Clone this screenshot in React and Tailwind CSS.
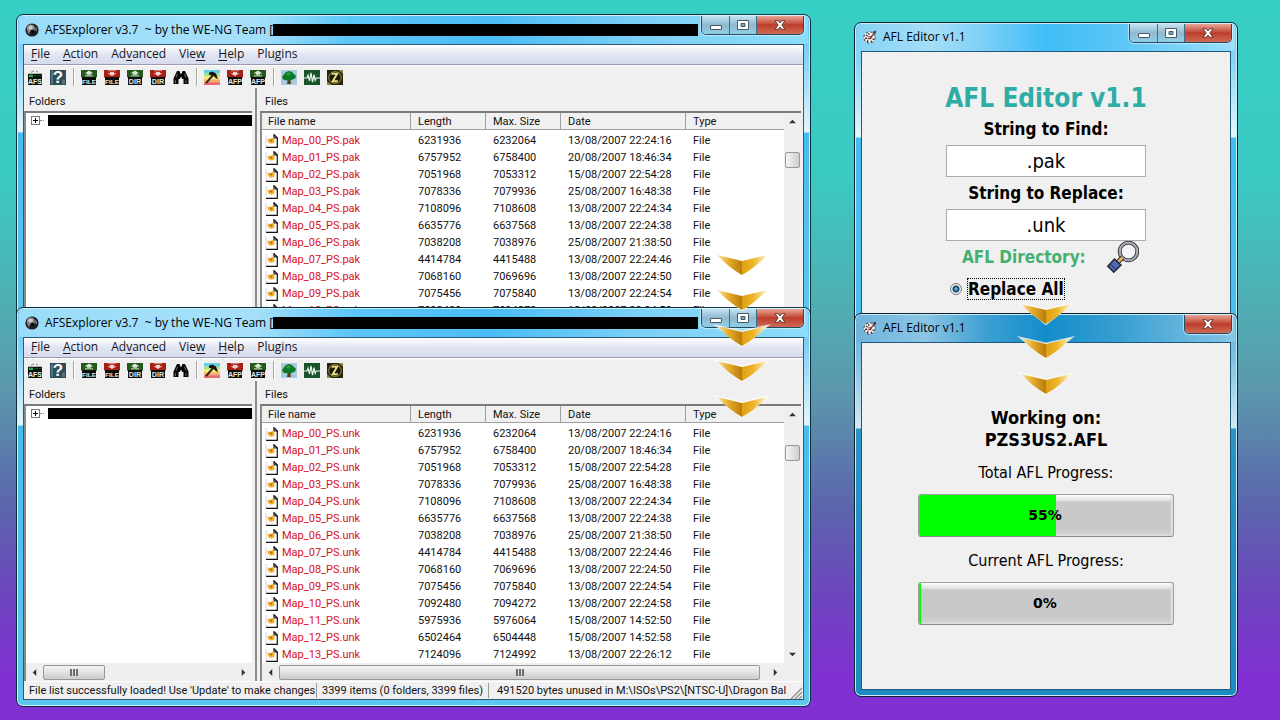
import React from "react";

const files = [
  ["6231936", "6232064", "13/08/2007 22:24:16"],
  ["6757952", "6758400", "20/08/2007 18:46:34"],
  ["7051968", "7053312", "15/08/2007 22:54:28"],
  ["7078336", "7079936", "25/08/2007 16:48:38"],
  ["7108096", "7108608", "13/08/2007 22:24:34"],
  ["6635776", "6637568", "13/08/2007 22:24:38"],
  ["7038208", "7038976", "25/08/2007 21:38:50"],
  ["4414784", "4415488", "13/08/2007 22:24:46"],
  ["7068160", "7069696", "13/08/2007 22:24:50"],
  ["7075456", "7075840", "13/08/2007 22:24:54"],
  ["7092480", "7094272", "13/08/2007 22:24:58"],
  ["5975936", "5976064", "15/08/2007 14:52:50"],
  ["6502464", "6504448", "15/08/2007 14:52:58"],
  ["7124096", "7124992", "13/08/2007 22:26:12"],
];

function SoccerIcon() {
  return (
    <svg viewBox="0 0 14 14" className="size-[14px] shrink-0" aria-hidden="true">
      <circle cx="7" cy="7" r="6.6" fill="#1f1f22" />
      <circle cx="5.8" cy="5.4" r="4" fill="#8a8a90" />
      <path d="M3 4.500l2.500-2 2.500 1-.8 2.500-2.800.5z" fill="#c9c9ce" />
      <path d="M5.500 7.500l2.600-1 1.700 2-1.600 2.200L5.500 10z" fill="#060607" />
      <path d="M10 3.800l2 1.800v2.600l-1.800-.8z" fill="#6f6f75" />
      <path d="M2 8.400l2 .8.8 2-1.600-.6z" fill="#7f7f85" />
    </svg>
  );
}

function EditorIcon() {
  return (
    <svg viewBox="0 0 14 14" className="size-[14px] shrink-0" aria-hidden="true">
      <circle cx="6.500" cy="7.500" r="5.600" fill="#f7f3f3" stroke="#3f393a" strokeWidth="1" strokeDasharray="2.400 2" />
      <path d="M3 5l1.500 1M2 8.500l2-.3M4 12l1.200-1.600M8.500 12.300L8 10.800M11.300 9.500l-1.800-.6M5.500 3.200l.6 1.600" stroke="#2c2526" strokeWidth="1.300" />
      <path d="M4.500 6.700h4M4.500 8.900l4-.8" stroke="#a84d53" strokeWidth="1.100" />
      <path d="M6.500 9L11.500 2.800" stroke="#6a3036" strokeWidth="1.300" />
      <path d="M9.500 2l3.400-1.500-.2 3.400z" fill="#741d27" />
    </svg>
  );
}

function Tag({ label, size = 7.2 }) {
  return (
    <>
      <path d="M1 7.500h14V16H1z" fill="#0b0d0b" />
      <text x="8" y="14.600" textAnchor="middle" fontSize={size} fontWeight="bold" fill="#e3e8e3" fontFamily="Liberation Sans, sans-serif">
        {label}
      </text>
    </>
  );
}

function Up({ label, size }) {
  return (
    <>
      <path d="M0 0h16v8H0z" fill="#24591c" />
      <path d="M8 .6l4.500 3H10V5H6V3.600H3.500z" fill="#d7ead2" />
      <path d="M4 6.200h8" stroke="#b9d1b4" strokeWidth="1.200" />
      <Tag label={label} size={size} />
    </>
  );
}

function Down({ label, size }) {
  return (
    <>
      <path d="M0 0h16v8H0z" fill="#a81f14" />
      <path d="M8 6.400l4.500-3H10V2H6v1.400H3.500z" fill="#f3d0cb" />
      <path d="M4 .8h8" stroke="#d69a93" strokeWidth="1" />
      <Tag label={label} size={size} />
    </>
  );
}

const art = {
  afs: (
    <>
      <path d="M4 2.500L7 .8M9 .8l2 1.500" stroke="#5b6b5b" strokeWidth=".8" />
      <path d="M1 4h14v12H1z" fill="#0a120b" />
      <path d="M2 5h4v2.500H2z" fill="#22b04a" />
      <path d="M7 6h8" stroke="#1d4727" />
      <text x="8" y="14.600" textAnchor="middle" fontSize="7" fontWeight="bold" fill="#e4f2e4" fontFamily="Liberation Sans, sans-serif">AFS</text>
    </>
  ),
  help: (
    <>
      <path d="M0 0h16v16H0z" fill="#2f4c57" />
      <path d="M1 1h2v14H1zM12 10h3v5h-3z" fill="#527583" />
      <text x="8" y="14" textAnchor="middle" fontSize="17" fontWeight="bold" fill="#f6fafb" fontFamily="Liberation Sans, sans-serif">?</text>
    </>
  ),
  upFile: <Up label="FILE" size={6.4} />,
  downFile: <Down label="FILE" size={6.4} />,
  upDir: <Up label="DIR" />,
  downDir: <Down label="DIR" />,
  find: (
    <>
      <path d="M4 1h2.500l1 3h1l1-3H12l3.500 8v6h-5v-5.500H9V8H7v1.500H5.500V15h-5V9z" fill="#080808" />
      <path d="M4.500 4L3 8M11.500 4L13 8M2.500 11v3M13 11v3" stroke="#8c8c8c" strokeWidth=".8" />
    </>
  ),
  tool: (
    <>
      <path d="M0 0h16v4H0z" fill="#65cfe3" />
      <path d="M0 4h16v3H0z" fill="#b5e07a" />
      <path d="M0 7h16v3H0z" fill="#f6ed79" />
      <path d="M0 10h16v3H0z" fill="#f5ae68" />
      <path d="M0 13h16v3H0z" fill="#ec6a72" />
      <path d="M2 14l7.500-9" stroke="#33240c" strokeWidth="2" />
      <path d="M5 3l3-1.500 4 2.200L14 9.500l-2-.8L9.500 6 5 5z" fill="#17140c" />
    </>
  ),
  downAfp: <Down label="AFP" size={7} />,
  upAfp: <Up label="AFP" size={7} />,
  tree: (
    <>
      <path d="M0 0h16v16H0z" fill="#a9cbe2" />
      <path d="M7 9h2.200l.8 6H6z" fill="#5a3d1e" />
      <path d="M8 1l3 1 1.500 2 2.500 2-.8 3-3.200 1.500-2 1-3-.4L2 10 1 7.500 3 4.500 5 2z" fill="#0f7a26" />
      <path d="M5 4l3-1.500 2 2-3 2z" fill="#27a340" />
    </>
  ),
  wave: (
    <>
      <path d="M0 0h16v16H0z" fill="#18532b" />
      <path d="M0 8.500h3l1-3 1.500 6L7 3l1.500 10L10 5l1.200 6 1-2.500H16" fill="none" stroke="#e9f4ea" strokeWidth="1.200" />
    </>
  ),
  zed: (
    <>
      <path d="M0 0h16v16H0z" fill="#24230b" />
      <path d="M11 0h5v4M0 12v4h5" fill="#8f8740" />
      <circle cx="8" cy="8" r="6.300" fill="#1b1a08" stroke="#8a8130" strokeWidth="1.200" />
      <path d="M4.800 3h7L7.500 10.800l2.500.2 1-1-.6 3H4L8.400 5l-2.400-.2-1.400 1z" fill="#e6dc8a" />
    </>
  ),
};

const tools = [
  ["afs", "Open AFS"], ["help", "About"], null,
  ["upFile", "Export file"], ["downFile", "Import file"], ["upDir", "Export folder"], ["downDir", "Import folder"], ["find", "Find"], null,
  ["tool", "Rebuild"], ["downAfp", "Import AFP"], ["upAfp", "Export AFP"], null,
  ["tree", "Tree plugin"], ["wave", "Audio plugin"], ["zed", "Z plugin"],
];

const menus = [
  ["", "F", "ile"], ["", "A", "ction"], ["Ad", "v", "anced"], ["Vie", "w", ""], ["", "H", "elp"], ["Plugins", "", ""],
];

function WindowButtons({ full }) {
  const glass = "bg-linear-to-b from-[#c5e3f2] via-[#8fb9cf] via-50% to-[#90cfe8]";
  return (
    <div className="flex h-[19px] shrink-0 overflow-hidden rounded-b-[5px] border border-t-0 border-[#234b63] shadow-[0_0_1px_1px_rgba(220,245,255,0.7)]">
      {full && (
        <>
          <button type="button" aria-label="Minimize" className={`flex w-7 items-center justify-center border-r border-[#3d6d87] ${glass}`}>
            <span className="mt-1 h-[5px] w-3 rounded-[1px] border border-[#4b5966] bg-white" />
          </button>
          <button type="button" aria-label="Maximize" className={`flex w-[27px] items-center justify-center border-r border-[#3d6d87] ${glass}`}>
            <svg viewBox="0 0 12 10" className="h-[10px] w-3" aria-hidden="true">
              <path d="M.5.5h11v9H.5z" fill="#fff" stroke="#4b5966" />
              <path d="M4 3.500h4v3H4z" fill="#7ba6bf" stroke="#4b5966" />
            </svg>
          </button>
        </>
      )}
      <button type="button" aria-label="Close" className="flex w-[46px] items-center justify-center bg-linear-to-b from-[#e5a597] via-[#bd3c2b] via-50% to-[#cf6a55]">
        <svg viewBox="0 0 12 10" className="h-[10px] w-3" aria-hidden="true">
          <path d="M1 .7h3.100L6 2.900 7.900.7H11L7.800 5 11 9.300H7.900L6 7.100 4.100 9.300H1L4.200 5z" fill="#fff" stroke="#573331" strokeWidth=".9" />
        </svg>
      </button>
    </div>
  );
}

function ScrollArrow({ label, d }) {
  return (
    <button type="button" aria-label={label} className="flex size-[17px] shrink-0 items-center justify-center">
      <svg viewBox="0 0 8 8" className="size-[7px]" aria-hidden="true">
        <path d={d} fill="#333" />
      </svg>
    </button>
  );
}

const LEFT = "M6 0v8L2 4z";
const RIGHT = "M2 0v8l4-4z";
const UP = "M0 6h8L4 2z";
const DOWN = "M0 2h8L4 6z";

function HScroll({ thumb }) {
  return (
    <div className="flex h-[18px] items-center bg-[#efefef]">
      <ScrollArrow label="Scroll left" d={LEFT} />
      <div className="flex flex-1">
        <div className={`flex h-[15px] items-center justify-center gap-px rounded-[2px] border border-[#979797] bg-linear-to-b from-[#f4f4f4] via-[#e2e2e2] via-50% to-[#cbcbcb] ${thumb}`}>
          <span className="h-[7px] w-[2px] bg-[#6d6d6d]" />
          <span className="h-[7px] w-[2px] bg-[#6d6d6d]" />
          <span className="h-[7px] w-[2px] bg-[#6d6d6d]" />
        </div>
      </div>
      <ScrollArrow label="Scroll right" d={RIGHT} />
    </div>
  );
}

function FileIcon() {
  return (
    <svg viewBox="0 0 13 14" className="h-[14px] w-[13px] shrink-0" aria-hidden="true">
      <path d="M1 1h8l3 3v9H1z" fill="#fdfdfd" />
      <path d="M1 13.300h11.300V4M9 .7l3.300 3.300H9z" fill="none" stroke="#111" strokeWidth="1.200" />
      <path d="M1 1v12" stroke="#c5c5c5" strokeWidth=".7" />
      <path d="M2.500 4.500l2.500.5L9 3.500l.6 5L7 9.500H4.800L2.800 7.500z" fill="#f1b129" />
      <path d="M5 5.500l2.500.3-.5 2-2-.7z" fill="#b8661c" />
    </svg>
  );
}

function Explorer({ extension, rows, complete, className }) {
  const head = "border-r border-b border-[#9f9f9f] bg-[#f0f0f0] pl-[7px] text-left font-normal";
  return (
    <section
      aria-label="AFSExplorer"
      className={`w-[795px] rounded-[7px] border border-[#0d2c38] bg-[linear-gradient(180deg,#5fc6f7_0px,#7fd2f8_40px,#e4f6fe_117px,#45bcf1_118px,#5cc8ef_100%)] p-px pb-[6px] shadow-[inset_0_0_0_1px_#c9f2ff] ${className}`}
    >
      <header className="mx-px flex h-7 items-start rounded-t-[5px] bg-[linear-gradient(90deg,#9adcf9_0%,#a5e0fa_30%,#5cc6f8_42%,#4bbdf6_60%,#7ed1f6_80%,#8cdcfb_100%)] pr-[4px] pl-[6px]">
        <div className="flex min-w-0 flex-1 items-center pt-[5px]">
          <SoccerIcon />
          <h2 className="ml-[6px] font-['Open_Sans','Noto_Sans',sans-serif] text-xs leading-[18px] whitespace-pre text-black">
            {"AFSExplorer v3.7  ~ by the WE-NG Team ["}
          </h2>
          <span className="mr-[3px] h-3 flex-1 bg-black" />
        </div>
        <WindowButtons full />
      </header>

      <div className="mx-[5px] border border-[#2b5b78] bg-[#f0f0f0] font-['Roboto','Liberation_Sans',sans-serif] text-[11px] leading-[15px] text-[#111]">
        <nav aria-label="Menu" className="flex h-5 items-center gap-[13px] border-b border-[#9a9ab0] bg-linear-to-b from-white via-[#e2e6f3] to-[#d6dbed] pb-[2px] pl-[7px] font-['Open_Sans','Noto_Sans',sans-serif] text-xs text-[#16161c]">
          {menus.map(([before, key, after]) => (
            <button key={before + key} type="button" className="leading-[18px]">
              {before}
              <span className="underline underline-offset-2">{key}</span>
              {after}
            </button>
          ))}
        </nav>

        <div role="toolbar" className="flex h-[23px] items-center border-t border-white pl-[3px]">
          {tools.map((tool, i) =>
            tool ? (
              <button key={tool[0]} type="button" aria-label={tool[1]} className="w-[23px]">
                <svg viewBox="0 0 16 16" preserveAspectRatio="none" className="h-[15px] w-4">{art[tool[0]]}</svg>
              </button>
            ) : (
              <span key={i} className="mr-[6px] h-[18px] w-[2px] border-r border-white bg-[#a5a5a5]" />
            )
          )}
        </div>

        <div className="flex gap-[3px] pr-[2px]">
          <section className="flex w-[228px] flex-col">
            <h3 className="h-[23px] pt-[6px] pl-[5px]">Folders</h3>
            <div className="flex flex-1 flex-col border-t-2 border-l-2 border-t-[#7a7a7a] border-l-[#8a8a8a] bg-white">
              <div className="flex flex-1 items-start pt-px pl-[5px]">
                <button type="button" aria-label="Expand folder" className="mt-[2px] flex size-[9px] items-center justify-center border border-[#777] bg-white">
                  <svg viewBox="0 0 5 5" className="size-[5px]"><path d="M2 0h1v2h2v1H3v2H2V3H0V2h2z" fill="#000" /></svg>
                </button>
                <span className="mt-[6px] mr-[4px] w-[4px] border-t border-dotted border-[#888]" />
                <span className="mt-px h-[11px] flex-1 bg-black" />
              </div>
              {complete && <HScroll thumb="w-[62px]" />}
            </div>
          </section>

          <span className="w-[2px] bg-[#8d8d8d]" />

          <section className="flex min-w-0 flex-1 flex-col">
            <h3 className="h-[23px] pt-[6px] pl-[5px]">Files</h3>
            <div className="border-t-2 border-l-2 border-t-[#7a7a7a] border-l-[#8a8a8a] bg-white">
              <div className="flex">
                <div className="flex-1">
                  <table className="w-full table-fixed border-separate border-spacing-0">
                    <thead>
                      <tr className="h-[17px]">
                        <th className="w-[149px] border-r border-b border-[#9f9f9f] bg-[#f0f0f0] pl-[6px] text-left font-normal">File name</th>
                        <th className={`w-[75px] ${head}`}>Length</th>
                        <th className={`w-[75px] ${head}`}>Max. Size</th>
                        <th className={`w-[125px] ${head}`}>Date</th>
                        <th className="border-b border-[#9f9f9f] bg-[#f0f0f0] pl-[7px] text-left font-normal">Type</th>
                      </tr>
                    </thead>
                    <tbody className="before:block before:h-[2px] before:content-['']">
                      {files.slice(0, rows).map(([length, max, date], i) => (
                        <tr key={i} className="h-[17px]">
                          <td className="p-0 pl-[3px] text-[#d9101a]">
                            <span className="flex h-[17px] items-center gap-[4px]">
                              <FileIcon />
                              {`Map_${String(i).padStart(2, "0")}_PS.${extension}`}
                            </span>
                          </td>
                          <td className="p-0 pl-[7px]">{length}</td>
                          <td className="p-0 pl-[7px]">{max}</td>
                          <td className="p-0 pl-[7px]">{date}</td>
                          <td className="p-0 pl-[7px]">File</td>
                        </tr>
                      ))}
                    </tbody>
                  </table>
                </div>
                <div className="flex w-[17px] flex-col items-center bg-[#efefef]">
                  <ScrollArrow label="Scroll up" d={UP} />
                  <div className="flex-1 pt-[22px]">
                    <div className="h-4 w-[15px] rounded-[2px] border border-[#979797] bg-linear-to-r from-[#f4f4f4] to-[#cfcfcf]" />
                  </div>
                  {complete && <ScrollArrow label="Scroll down" d={DOWN} />}
                </div>
              </div>
              {complete && (
                <div className="bg-[#efefef] pr-[17px]">
                  <HScroll thumb="w-[481px]" />
                </div>
              )}
            </div>
          </section>
        </div>

        {complete && (
          <footer className="flex h-[18px] items-center overflow-hidden border-t border-white whitespace-nowrap">
            <span className="w-[293px] shrink-0 border-r border-[#999] pl-[5px]">File list successfully loaded! Use 'Update' to make changes</span>
            <span className="w-[172px] shrink-0 border-r border-[#999] pl-[5px]">3399 items (0 folders, 3399 files)</span>
            <span className="min-w-0 flex-1 overflow-hidden pl-[8px]">{"491520 bytes unused in M:\\ISOs\\PS2\\[NTSC-U]\\Dragon Bal"}</span>
            <svg viewBox="0 0 12 12" className="mr-px size-3 shrink-0 self-end" aria-hidden="true">
              <path d="M1 12L12 1M5 12l7-7M9 12l3-3" stroke="#8c8c8c" strokeWidth="1.300" />
            </svg>
          </footer>
        )}
      </div>
    </section>
  );
}

function EditorWindow({ active = false, className, children }) {
  const frame = active
    ? "bg-[linear-gradient(180deg,#6ccbf8_0px,#8ad6f8_40px,#e6f7fe_114px,#45bcf1_115px,#4fc3f0_100%)]"
    : "bg-[linear-gradient(180deg,#5fb0dc_0px,#79bfe2_40px,#d2e9f4_114px,#2c93c6_115px,#1c8cc0_100%)]";
  const bar = active
    ? "bg-[linear-gradient(90deg,#86d3f6_0%,#a6def7_20%,#7acff8_34%,#40bdf7_50%,#5cc6f5_70%,#9adffb_100%)]"
    : "bg-[linear-gradient(90deg,#6fb4dc_0%,#8cc5e4_18%,#3da0d2_34%,#128dca_50%,#3aa0d2_70%,#86c6e6_100%)]";
  return (
    <section
      aria-label="AFL Editor"
      className={`w-[384px] rounded-[7px] border border-[#0d2230] p-px pb-[6px] shadow-[inset_0_0_0_1px_#c9ecfb] ${frame} ${className}`}
    >
      <header className={`mx-px flex h-[27px] items-start justify-between rounded-t-[5px] pr-[3px] pl-[6px] ${bar}`}>
        <div className="flex items-center gap-[6px] pt-[4px]">
          <EditorIcon />
          <h2 className="font-['Open_Sans','Noto_Sans',sans-serif] text-xs leading-[18px] text-black">AFL Editor v1.1</h2>
        </div>
        <WindowButtons full={active} />
      </header>
      <div className="mx-[5px] h-[348px] border border-[#1f5878] bg-[#f0f0f0] font-['DejaVu_Sans_Condensed','DejaVu_Sans',sans-serif] text-black">
        {children}
      </div>
    </section>
  );
}

function Magnifier() {
  return (
    <svg viewBox="0 0 32 32" className="size-8" aria-hidden="true">
      <circle cx="21.500" cy="10.500" r="8.800" fill="#f4f4f6" stroke="#25252b" strokeWidth="3.800" />
      <circle cx="21.500" cy="10.500" r="8.800" fill="none" stroke="#a9abb3" strokeWidth="2.200" />
      <path d="M15.500 16.500L10 22" stroke="#2b2722" strokeWidth="4.600" />
      <path d="M15.500 16.500L10 22" stroke="#e9b662" strokeWidth="2.800" />
      <path d="M7.500 18l6.500 6-7.200 7.200L.8 25.200z" fill="#5467b4" stroke="#23263d" strokeWidth="1.500" />
      <path d="M3 22.800l6 5.900" stroke="#23263d" strokeWidth=".9" />
    </svg>
  );
}

function Progress({ id, label, value }) {
  return (
    <div className="flex w-full flex-col items-center">
      <span id={id} className="text-base leading-[22px]">{label}</span>
      <div
        role="progressbar"
        aria-labelledby={id}
        aria-valuenow={value}
        className="relative mt-[10px] h-[43px] w-64 overflow-hidden rounded-[3px] border border-[#a0a0a0] border-b-[#8a8a8a] bg-[linear-gradient(180deg,#fff_0px,#dcdcdc_6px,#c9c9c9_7px,#c9c9c9_34px,#d4d4d4_100%)] shadow-[inset_-2px_-1px_2px_#e2e2e2]"
      >
        <div className="h-full min-w-[2px] bg-[#00ff00]" style={{ width: `${value * 0.98}%` }} />
        <span className="absolute inset-0 flex items-center justify-center pr-[2px] pb-[2px] font-['DejaVu_Sans',sans-serif] text-sm font-bold">
          {value}%
        </span>
      </div>
    </div>
  );
}

function Arrow({ className }) {
  return (
    <svg viewBox="0 0 58 24" className={`absolute h-6 w-[58px] ${className}`} aria-hidden="true">
      <path d="M0 0L29 6.500 58 0 29 23.500z" fill="#fff" opacity=".75" />
      <path d="M4 2L29 8V22Q15 14 4 2z" fill="url(#goldLeft)" />
      <path d="M54 2L29 8V22Q43 14 54 2z" fill="url(#goldRight)" />
    </svg>
  );
}

export default function App() {
  return (
    <main className="relative min-h-screen w-full overflow-hidden bg-[linear-gradient(180deg,#36cfc5_0%,#3bc9c3_25%,#50adb3_43%,#5c93ac_56%,#5b66ac_70%,#6f42c0_84%,#8030d2_94%,#812fd3_100%)]">
      <svg className="absolute size-0" aria-hidden="true">
        <defs>
          <linearGradient id="goldLeft" x1="0" x2="1">
            <stop offset="0" stopColor="#fbe7ae" />
            <stop offset=".45" stopColor="#e6ad2e" />
            <stop offset=".8" stopColor="#cb8d14" />
            <stop offset="1" stopColor="#b57c10" />
          </linearGradient>
          <linearGradient id="goldRight" x1="0" x2="1">
            <stop offset="0" stopColor="#e0a015" />
            <stop offset=".45" stopColor="#eeb52a" />
            <stop offset="1" stopColor="#fff3cb" />
          </linearGradient>
        </defs>
      </svg>

      <Explorer extension="pak" rows={11} className="absolute top-[14px] left-4" />
      <Explorer extension="unk" rows={14} complete className="absolute top-[307px] left-4" />

      <EditorWindow active className="absolute top-[22px] left-[854px]">
        <form className="flex flex-col items-center pt-8 text-[17px] leading-8 font-bold" onSubmit={(e) => e.preventDefault()}>
          <h1 className="text-[26px] leading-[29px] text-[#2eaca6]">AFL Editor v1.1</h1>
          <label htmlFor="find">String to Find:</label>
          <input id="find" defaultValue=".pak" className="h-8 w-50 border border-[#ababab] bg-white text-center text-xl font-normal" />
          <label htmlFor="replace">String to Replace:</label>
          <input id="replace" defaultValue=".unk" className="h-8 w-50 border border-[#ababab] bg-white text-center text-xl font-normal" />
          <div className="flex h-8 w-50 items-center justify-between pr-[7px] pl-4">
            <span className="text-[#46b071]">AFL Directory:</span>
            <button type="button" aria-label="Browse for AFL directory"><Magnifier /></button>
          </div>
          <label className="flex h-8 w-50 items-center gap-[5px] pl-[4px]">
            <input
              type="radio"
              name="mode"
              defaultChecked
              className="size-3 appearance-none rounded-full border border-[#77797c] bg-[radial-gradient(circle,#7fd6f5_0px,#1d6f9c_2px,#12364f_3px,#eef3f6_4px)]"
            />
            <span className="border border-dotted border-black leading-5">Replace All</span>
          </label>
        </form>
      </EditorWindow>

      <EditorWindow className="absolute top-[313px] left-[854px]">
        <div className="flex flex-col items-center pt-16">
          <p className="mb-[11px] text-center text-lg leading-[22px] font-bold">
            Working on:
            <br />
            PZS3US2.AFL
          </p>
          <div className="flex w-full flex-col gap-[13px]">
            <Progress id="total" label="Total AFL Progress:" value={55} />
            <Progress id="current" label="Current AFL Progress:" value={0} />
          </div>
        </div>
      </EditorWindow>

      <Arrow className="top-[253px] left-[713px]" />
      <Arrow className="top-[288px] left-[713px]" />
      <Arrow className="top-[324px] left-[713px]" />
      <Arrow className="top-[359px] left-[713px]" />
      <Arrow className="top-[395px] left-[713px]" />
      <Arrow className="top-[302px] left-[1017px]" />
      <Arrow className="top-[336px] left-[1017px]" />
      <Arrow className="top-[372px] left-[1017px]" />
    </main>
  );
}
